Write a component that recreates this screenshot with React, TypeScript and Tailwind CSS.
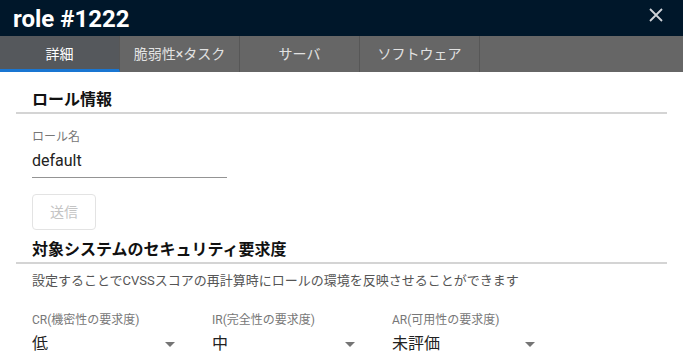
import React from 'react';

const tabs = ['詳細', '脆弱性×タスク', 'サーバ', 'ソフトウェア'];

const selects = [
  { label: 'CR(機密性の要求度)', value: '低' },
  { label: 'IR(完全性の要求度)', value: '中' },
  { label: 'AR(可用性の要求度)', value: '未評価' },
];

const SectionTitle: React.FC<{ children: React.ReactNode; className?: string }> = ({ children, className }) => (
  <div className={`mx-4 border-b-2 border-[#d4d4d4] ${className ?? ''}`}>
    <h2 className="px-4 text-base leading-6 font-bold text-[#111]">{children}</h2>
  </div>
);

const App: React.FC = () => {
  return (
    <div
      className="w-[683px] h-[360px] overflow-hidden bg-white"
      style={{ fontFamily: 'Roboto, "Noto Sans CJK JP", sans-serif' }}
    >
      {/* header */}
      <header className="h-9 bg-[#00172a] flex items-start justify-between pl-[13px] pr-5">
        <h1 className="pt-[3px] text-2xl leading-8 font-bold text-white">role #1222</h1>
        <svg className="mt-2 w-[14px] h-[14px] text-[#cfd3d8]" viewBox="0 0 14 14" fill="none" stroke="currentColor" strokeWidth="1.8">
          <path d="M1 1l12 12M13 1L1 13" />
        </svg>
      </header>

      {/* tabs */}
      <nav className="h-9 bg-[#666666] flex">
        {tabs.map((t, i) => (
          <div
            key={t}
            className={`w-[120px] h-9 flex items-center justify-center text-sm border-r border-[#575757] ${
              i === 0 ? 'bg-[#55585c] text-white border-b-[3px] border-b-[#1976d2] pt-[3px]' : 'text-[#e2e2e2]'
            }`}
          >
            {t}
          </div>
        ))}
      </nav>

      <main>
        <SectionTitle className="mt-4">ロール情報</SectionTitle>

        <div className="px-8">
          <div className="mt-[15px] text-xs leading-4 text-[#777]">ロール名</div>
          <div className="mt-1 w-[195px] pb-1 border-b border-[#949494] text-base leading-6 text-[#222]">default</div>
          <button
            disabled
            className="mt-4 w-16 h-9 rounded border border-[#e3e3e3] text-sm text-[#c4c4c4]"
          >
            送信
          </button>
        </div>

        <SectionTitle className="mt-2">対象システムのセキュリティ要求度</SectionTitle>

        <div className="px-8">
          <p className="mt-[7px] text-[13px] leading-5 text-[#555]">
            設定することでCVSSスコアの再計算時にロールの環境を反映させることができます
          </p>
          <div className="mt-[21px] flex">
            {selects.map((s) => (
              <div key={s.label} className="w-[180px] pr-8">
                <div className="text-xs leading-4 text-[#777] whitespace-nowrap">{s.label}</div>
                <div className="mt-1 flex items-center justify-between pr-[5px]">
                  <span className="text-base leading-6 text-[#222]">{s.value}</span>
                  <svg className="w-[10px] h-[5px] text-[#757575]" viewBox="0 0 10 5" fill="currentColor">
                    <path d="M0 0h10L5 5z" />
                  </svg>
                </div>
              </div>
            ))}
          </div>
        </div>
      </main>
    </div>
  );
};

export default App;
